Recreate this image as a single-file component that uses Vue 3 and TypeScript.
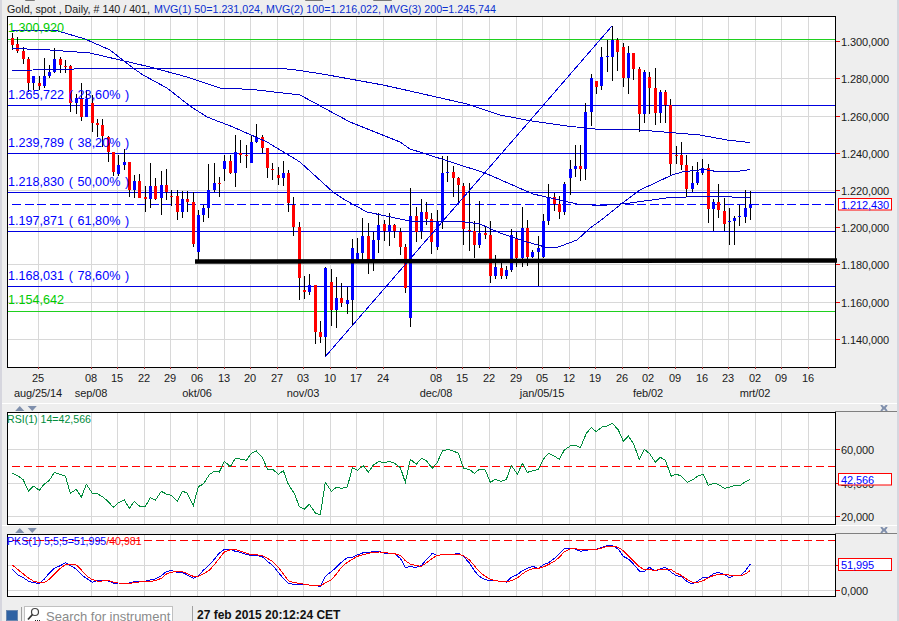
<script setup lang="ts">
type Candle = [number, number, number, number, 'r' | 'b']

// wick top, body top, body bottom, wick bottom, colour — one row per trading day
const candles: Candle[] = [
  [33,38,45,50,'r'],[37,44,51,53,'r'],[47,51,59,64,'r'],[57,59,83,92,'r'],[76,76,83,90,'b'],
  [76,83,86,90,'r'],[58,76,86,88,'b'],[65,72,76,78,'b'],[48,59,72,73,'b'],[57,59,65,73,'r'],
  [60,66,67,73,'r'],[65,66,103,112,'r'],[94,98,103,114,'b'],[83,98,117,121,'r'],[90,99,117,117,'b'],
  [95,103,123,132,'r'],[119,123,125,137,'r'],[119,125,136,147,'r'],[136,137,152,162,'r'],[152,152,172,176,'r'],
  [155,165,174,176,'b'],[149,162,165,170,'b'],[162,162,190,197,'r'],[175,181,190,198,'b'],[174,181,198,198,'r'],
  [186,197,199,212,'r'],[163,186,199,208,'b'],[178,186,199,200,'r'],[171,185,198,215,'b'],[169,185,192,200,'r'],
  [190,196,197,206,'r'],[190,196,212,220,'r'],[191,199,212,218,'b'],[191,199,202,212,'r'],[192,202,244,247,'r'],
  [210,215,252,261,'b'],[205,208,215,222,'b'],[164,190,208,218,'b'],[163,183,190,192,'b'],[177,183,184,197,'r'],
  [155,161,169,181,'b'],[155,161,173,174,'r'],[135,152,173,187,'b'],[140,153,155,163,'r'],[145,155,156,168,'r'],
  [135,142,163,163,'b'],[124,137,142,143,'b'],[135,137,148,153,'r'],[148,148,168,178,'r'],[163,169,170,180,'r'],
  [167,175,178,185,'r'],[161,173,178,186,'b'],[170,173,203,212,'r'],[197,205,227,236,'r'],[222,227,278,300,'r'],
  [276,290,292,299,'r'],[274,285,292,295,'b'],[285,285,332,344,'r'],[321,332,337,343,'r'],[267,268,337,357,'b'],
  [269,282,310,326,'r'],[277,298,310,328,'b'],[283,298,303,307,'r'],[287,300,304,314,'b'],[239,248,300,326,'b'],
  [238,253,263,263,'b'],[218,236,253,260,'b'],[223,236,263,274,'r'],[232,240,259,271,'b'],[213,225,240,253,'b'],
  [220,224,231,241,'r'],[213,225,232,246,'b'],[224,225,231,238,'r'],[228,232,247,255,'r'],[244,247,288,293,'r'],
  [188,216,318,327,'b'],[207,216,232,242,'r'],[199,212,231,239,'b'],[202,212,219,225,'r'],[213,219,242,254,'r'],
  [210,221,247,250,'b'],[156,173,221,229,'b'],[156,172,173,182,'b'],[166,172,178,197,'r'],[177,178,185,202,'r'],
  [183,186,229,245,'r'],[183,230,231,251,'r'],[221,231,245,258,'r'],[201,233,245,248,'b'],[226,233,235,239,'r'],
  [221,235,276,283,'r'],[255,267,276,279,'b'],[260,268,276,279,'r'],[266,270,276,279,'b'],[229,235,270,272,'b'],
  [232,239,258,267,'r'],[207,228,258,267,'b'],[220,228,257,266,'r'],[250,252,257,258,'b'],[236,248,252,286,'b'],
  [214,221,257,258,'b'],[184,197,221,225,'b'],[193,197,204,211,'r'],[196,204,212,219,'r'],[182,184,212,215,'b'],
  [160,169,178,195,'b'],[145,166,169,177,'b'],[145,166,169,181,'r'],[103,112,169,180,'b'],[74,78,112,126,'b'],
  [81,81,87,94,'r'],[47,57,86,90,'b'],[40,56,57,72,'b'],[26,40,57,81,'b'],[38,40,52,71,'r'],
  [43,47,78,87,'r'],[46,53,78,94,'b'],[53,53,69,80,'r'],[67,69,114,132,'r'],[70,72,114,123,'b'],
  [72,77,88,114,'r'],[68,88,113,125,'r'],[90,92,113,123,'b'],[90,92,105,123,'r'],[99,105,164,175,'r'],
  [146,155,156,164,'r'],[142,155,165,170,'r'],[155,165,189,197,'r'],[166,183,189,192,'b'],[162,172,183,185,'b'],
  [159,168,173,175,'b'],[164,168,209,223,'r'],[199,202,209,231,'b'],[184,202,210,218,'r'],[198,211,224,231,'r'],
  [208,221,222,245,'b'],[216,218,221,245,'b'],[205,216,217,226,'b'],[190,208,217,223,'b'],[191,204,208,220,'b'],
]

const candleX = (i: number) => Math.floor(12.5 + 5.31 * i)

const gridX = [38,91,117,144,170,197,224,250,277,303,330,356,383,436,462,489,516,542,569,595,622,648,675,702,728,755,781,808]
const dayLabels = ['25','08','15','22','29','06','13','20','27','03','10','17','24','08','15','22','29','05','12','19','26','02','09','16','23','02','09','16']
const monthLabels: [number, string][] = [[38,'aug/25/14'],[91,'sep/08'],[197,'okt/06'],[303,'nov/03'],[436,'dec/08'],[542,'jan/05/15'],[648,'feb/02'],[755,'mrt/02']]

const priceLevels: [number, string][] = [[41,'1.300,000'],[78,'1.280,000'],[116,'1.260,000'],[153,'1.240,000'],[190,'1.220,000'],[227,'1.200,000'],[264,'1.180,000'],[302,'1.160,000'],[339,'1.140,000']]
const fibLevels: [number, number, string, string][] = [
  [39.5,27,'1.300,920','#0c0'],
  [105.5,94,'1.265,722 ( 23,60% )','#00f'],
  [153.5,142,'1.239,789 ( 38,20% )','#00f'],
  [192.5,181,'1.218,830 ( 50,00% )','#00f'],
  [231.5,220,'1.197,871 ( 61,80% )','#00f'],
  [286.5,275,'1.168,031 ( 78,60% )','#00f'],
  [311.5,299,'1.154,642','#0c0'],
]

const pts = (rows: number[][]) => rows.map(p => p.join(',')).join(' ')

const ma50 = pts([[12,30.5],[58,31],[85,39],[110,50],[133,68],[143,75],[167,88],[190,106],[207,117],[233,127],[267,142],[300,162],[333,192],[345,200],[367,212],[400,219],[410,221],[443,222],[458,221],[480,224],[500,233],[527,242],[547,247.5],[557,247.5],[577,240],[590,228],[600,221],[620,205],[640,190],[672,175],[682,172],[703,169.5],[717,171.5],[737,171.5],[750,169.5]])
const ma100 = pts([[12,48],[27,49],[50,50],[90,53],[120,60],[150,67],[187,77],[220,88],[253,89.5],[300,95],[350,122],[400,142],[410,149],[423,153],[485,173],[533,194],[577,204],[600,205.5],[620,204],[630,203],[670,197.5],[687,197],[723,196.5],[750,198]])
const ma200 = pts([[12,70.5],[95,68.5],[133,68.5],[150,69],[200,68.5],[267,68.5],[283,68.5],[300,70.5],[328,75],[383,85],[410,91],[467,104],[500,115],[530,120.7],[567,126],[600,129.5],[640,130],[700,135],[727,140],[750,142.5]])

// panel series, read off a 3x zoom of each 300-px-wide column of the reference
const scale = (xo: number, rows: number[]) => {
  const out: number[][] = []
  for (let k = 0; k < rows.length; k += 2) out.push([xo + rows[k] / 3, 400 + rows[k + 1] / 3])
  return out
}
const rsi = pts([
  ...scale(0,[37,220,55,228,70,240,85,273,100,258,118,271,133,252,148,241,163,217,181,224,196,228,211,280,229,268,244,292,259,253,277,280,292,281,307,290,325,305,340,322,355,308,373,300,388,325,403,304,418,318,436,319,451,293,466,301,484,274,499,282,514,286,532,304,547,273,562,280,580,316,595,260,610,252,628,224,643,214,658,216,673,184,691,200,706,175,721,177,739,181,754,160,769,153,787,172,802,207,817,207,835,223,850,212,865,253,883,280,898,320]),
  ...scale(300,[13,328,28,313,46,339,61,344,76,247,94,274,109,262,124,265,142,261,157,203,172,211,190,197,205,217,220,195,238,184,253,189,268,184,283,189,301,203,316,247,331,178,349,193,364,175,379,182,397,205,412,187,427,153,445,148,460,153,475,160,490,205,508,208,523,220,538,208,556,210,571,247,586,238,604,244,619,238,634,196,652,223,667,190,682,217,700,212,715,208,730,178,745,160,763,168,778,178,793,150,811,138,826,135,841,143,859,100,874,83,889,95]),
  ...scale(600,[7,80,22,78,37,70,55,90,70,124,85,108,100,130,118,178,133,148,148,160,166,187,181,172,196,181,214,229,229,222,244,229,262,247,277,240,292,229,310,223,325,256,340,250,355,253,373,265,388,262,403,256,421,256,436,245,451,238]),
])
const pksBlue = pts([
  ...scale(0,[37,511,55,529,70,536,85,546,100,551,118,553,133,540,148,522,163,508,181,500,196,491,211,500,229,510,244,527,259,538,277,550,292,545,307,545,325,546,340,552,355,552,373,553,388,552,403,548,418,548,436,547,451,543,466,540,484,530,499,518,514,514,532,520,547,520,562,528,580,538,595,530,610,514,628,497,643,481,658,462,673,451,691,451,706,457,721,460,739,466,754,470,769,469,787,473,802,487,817,498,835,520,850,538,865,553,883,556,898,556]),
  ...scale(300,[13,556,28,558,46,560,61,562,76,532,94,518,109,505,124,490,142,476,157,475,172,468,190,461,205,460,220,458,238,458,253,462,268,464,283,464,301,478,316,505,331,503,349,505,364,500,379,482,397,463,412,470,427,466,445,466,460,466,475,463,490,472,508,492,523,515,538,532,556,542,571,545,586,545,604,547,619,549,634,535,652,527,667,515,682,508,700,502,715,510,730,497,745,492,763,478,778,465,793,448,811,449,826,450,841,457,859,454,874,451,889,451]),
  ...scale(600,[7,445,22,440,37,440,55,450,70,472,85,480,100,495,118,516,133,517,148,505,166,516,181,510,196,505,214,520,229,530,244,533,262,548,277,555,292,547,310,535,325,535,340,525,355,520,373,526,388,536,403,529,421,529,436,516,451,495]),
])
const pksRed = pts([
  ...scale(0,[37,498,55,513,70,525,85,537,100,546,118,551,133,551,148,541,163,525,181,508,196,497,211,496,229,498,244,513,259,530,277,542,292,546,307,546,325,545,340,549,355,552,373,553,388,553,403,551,418,549,436,548,451,547,466,545,484,538,499,525,514,520,532,517,547,518,562,524,580,532,595,532,610,525,628,514,643,497,658,478,673,459,691,452,706,451,721,456,739,462,754,467,769,467,787,470,802,478,817,487,835,505,850,525,865,545,883,551,898,553]),
  ...scale(300,[13,556,28,558,46,560,61,561,76,552,94,543,109,525,124,505,142,490,157,481,172,472,190,467,205,463,220,460,238,459,253,460,268,463,283,464,301,469,316,485,331,495,349,500,364,502,379,492,397,478,412,469,427,467,445,468,460,467,475,466,490,470,508,482,523,500,538,518,556,532,571,541,586,545,604,547,619,548,634,545,652,537,667,525,682,515,700,508,715,508,730,504,745,497,763,487,778,475,793,458,811,450,826,449,841,452,859,453,874,451,889,451]),
  ...scale(600,[7,447,22,442,37,441,55,445,70,455,85,470,100,485,118,503,133,512,148,512,166,514,181,511,196,510,214,512,229,522,244,529,262,542,277,549,292,551,310,545,325,536,340,530,355,526,373,526,388,528,403,530,421,531,436,525,451,514]),
])
</script>

<template>
  <div class="screen">
    <span class="stub stub-a"></span>
    <span class="stub stub-b"></span>
    <span class="stub stub-c"></span>
    <header class="title">
      <span class="title-dark">Gold, spot , Daily, # 140 / 401,</span>
      <span class="title-blue">MVG(1) 50=1.231,024, MVG(2) 100=1.216,022, MVG(3) 200=1.245,744</span>
    </header>

    <svg class="chart main" viewBox="2 16 895 387">
      <rect x="7" y="16" width="828" height="351" fill="#fff" />
      <g class="lines">
        <line v-for="x in gridX" :key="x" :x1="x + 0.5" :x2="x + 0.5" y1="17" y2="367" stroke="#d8d8d8" />
        <line v-for="l in priceLevels" :key="l[0]" x1="7" x2="835" :y1="l[0] + 0.5" :y2="l[0] + 0.5" stroke="#d8d8d8" />
        <line v-for="l in fibLevels" :key="l[2]" x1="7" x2="835" :y1="l[0]" :y2="l[0]" :stroke="l[3] === '#0c0' ? '#1fd01f' : '#0000e0'" />
        <line x1="12" x2="835" y1="204.5" y2="204.5" stroke="#00f" stroke-dasharray="9 3.5" />
        <g v-for="(c, i) in candles" :key="i">
          <rect :x="candleX(i)" :y="c[0]" width="1" :height="c[3] - c[0]" fill="#000" />
          <rect :x="candleX(i) - 1" :y="c[1]" width="3" :height="c[2] - c[1]" :fill="c[4] === 'r' ? '#f00' : '#00f'" />
        </g>
        <polyline :points="ma50" class="ma" />
        <polyline :points="ma100" class="ma" />
        <polyline :points="ma200" class="ma" />
        <line x1="325" y1="357" x2="612" y2="26" stroke="#00d" />
        <rect x="7" y="16" width="828" height="351" fill="none" stroke="#000" />
      </g>
      <line x1="195" y1="261.5" x2="837" y2="260.5" stroke="#000" stroke-width="4.5" />
      <text v-for="l in fibLevels" :key="l[2]" x="8" :y="l[1] + 4.5" class="fib" :fill="l[3]">{{ l[2] }}</text>
      <g class="lines">
        <line v-for="x in gridX" :key="x" :x1="x + 0.5" :x2="x + 0.5" y1="367" y2="369" stroke="#a33" />
        <line v-for="l in priceLevels" :key="l[0]" x1="836" x2="840" :y1="l[0] + 0.5" :y2="l[0] + 0.5" stroke="#e00" />
      </g>
      <text v-for="l in priceLevels" :key="l[0]" x="841" :y="l[0] + 4.5" class="axis">{{ l[1] }}</text>
      <text v-for="(d, i) in dayLabels" :key="i" :x="gridX[i]" y="382" class="axis mid">{{ d }}</text>
      <text v-for="m in monthLabels" :key="m[1]" :x="m[0]" y="397" class="axis mid">{{ m[1] }}</text>
      <rect x="838.5" y="198.5" width="53" height="11.5" fill="#fff" stroke="#f00" />
      <text x="841" y="209" class="value">1.212,430</text>
    </svg>

    <div class="pane-bar">
      <svg class="handles" viewBox="0 0 26 6"><path d="M0 6 L5.5 0 L11 6Z M15 0 L26 0 L20.5 6Z" fill="#7f8fac" /></svg>
      <svg class="close" viewBox="0 0 8 7"><path d="M0 0h2l2 2 2-2h2v1L6 3.5 8 6v1H6L4 5 2 7H0V6l2-2.5L0 1Z" fill="#7f8fac" /></svg>
    </div>

    <svg class="chart rsi" viewBox="2 411 895 114">
      <rect x="7" y="412" width="828" height="112" fill="#fff" />
      <g class="lines">
        <line v-for="x in gridX" :key="x" :x1="x + 0.5" :x2="x + 0.5" y1="413" y2="524" stroke="#d8d8d8" />
        <line v-for="y in [449, 483, 516]" :key="y" x1="7" x2="835" :y1="y + 0.5" :y2="y + 0.5" stroke="#d8d8d8" />
        <line x1="12" x2="835" y1="466.5" y2="466.5" stroke="#f00" stroke-dasharray="8 4" />
        <polyline :points="rsi" fill="none" stroke="#008c3c" />
        <rect x="7" y="412" width="828" height="112" fill="none" stroke="#000" />
        <line x1="835" x2="897" y1="411.5" y2="411.5" stroke="#808080" />
        <line v-for="y in [449, 483, 516]" :key="y" x1="836" x2="840" :y1="y + 0.5" :y2="y + 0.5" stroke="#e00" />
      </g>
      <text x="7" y="423" class="label" fill="#008c3c">RSI(1) 14=42,566</text>
      <text x="841" y="454" class="axis">60,000</text>
      <text x="841" y="488" class="axis">40,000</text>
      <text x="841" y="521" class="axis">20,000</text>
      <rect x="838.5" y="473.5" width="53" height="11.5" fill="#fff" stroke="#f00" />
      <text x="841" y="484" class="value">42,566</text>
    </svg>

    <div class="pane-bar">
      <svg class="handles" viewBox="0 0 26 6"><path d="M0 6 L5.5 0 L11 6Z M15 0 L26 0 L20.5 6Z" fill="#7f8fac" /></svg>
      <svg class="close" viewBox="0 0 8 7"><path d="M0 0h2l2 2 2-2h2v1L6 3.5 8 6v1H6L4 5 2 7H0V6l2-2.5L0 1Z" fill="#7f8fac" /></svg>
    </div>

    <svg class="chart pks" viewBox="2 534 895 64">
      <rect x="7" y="535" width="828" height="62" fill="#fff" />
      <g class="lines">
        <line v-for="x in gridX" :key="x" :x1="x + 0.5" :x2="x + 0.5" y1="536" y2="597" stroke="#d8d8d8" />
        <line v-for="y in [566, 591]" :key="y" x1="7" x2="835" :y1="y + 0.5" :y2="y + 0.5" stroke="#d8d8d8" />
        <line x1="12" x2="835" y1="541.5" y2="541.5" stroke="#f00" stroke-dasharray="8 4" />
        <polyline :points="pksBlue" fill="none" stroke="#00e" />
        <polyline :points="pksRed" fill="none" stroke="#f00" />
        <rect x="7" y="535" width="828" height="62" fill="none" stroke="#000" />
        <line x1="835" x2="897" y1="534.5" y2="534.5" stroke="#808080" />
        <line v-for="y in [566, 591]" :key="y" x1="836" x2="840" :y1="y + 0.5" :y2="y + 0.5" stroke="#e00" />
      </g>
      <text x="7" y="546" class="label" fill="#00f">PKS(1) 5;5;5=51,995<tspan fill="#f00">/40,981</tspan></text>
      <text x="841" y="596" class="axis">0,000</text>
      <rect x="838.5" y="559.5" width="53" height="12" fill="#fff" stroke="#f00" />
      <text x="841" y="570" class="value">51,995</text>
    </svg>

    <footer class="status">
      <span class="square"></span>
      <span class="rule"></span>
      <label class="search">
        <svg class="glass" viewBox="0 0 16 15">
          <circle cx="9" cy="5" r="3.5" fill="none" stroke="#444" stroke-width="1.2" />
          <path d="M6.5 7.5L2 12.5" stroke="#333" stroke-width="1.8" />
          <path d="M9 13.5h1M11 13.5h1M13 13.5h1" stroke="#222" />
        </svg>
        <span class="placeholder">Search for instrument</span>
      </label>
      <span class="rule tall"></span>
      <strong class="clock">27 feb 2015 20:12:24 CET</strong>
    </footer>
  </div>
</template>

<style scoped>
.screen {
  position: relative;
  width: 899px;
  height: 621px;
  box-sizing: border-box;
  overflow: hidden;
  display: flex;
  flex-direction: column;
  background: #eeeeee;
  border-left: 2px solid #d6d6de;
  border-right: 2px solid #d6d6de;
  font-family: "Liberation Sans", Arial, sans-serif;
}
.stub {
  position: absolute;
  top: 0;
  height: 1px;
  background: #777;
  border-radius: 0 0 2px 2px;
}
.stub-a { left: 23px; width: 10px; }
.stub-b { left: 303px; width: 18px; }
.stub-c { left: 371px; width: 19px; }
.title {
  height: 16px;
  flex: none;
  padding-left: 5px;
  display: flex;
  gap: 4px;
  font-size: 10.7px;
  line-height: 18px;
  white-space: nowrap;
  box-sizing: border-box;
}
.title-dark { color: #222; }
.title-blue { color: #0a2fd0; }
.chart { display: block; flex: none; width: 895px; }
.main { height: 387px; }
.rsi { height: 114px; }
.pks { height: 64px; }
.lines { shape-rendering: crispEdges; }
.ma { fill: none; stroke: #0000c8; }
.fib { font-size: 12.6px; word-spacing: 1.2px; }
.label { font-size: 10.6px; }
.axis { font-size: 11px; fill: #1a1a1a; letter-spacing: -0.1px; }
.mid { text-anchor: middle; }
.value { font-size: 11px; fill: #00f; letter-spacing: -0.1px; }
.pane-bar {
  flex: none;
  height: 8px;
  display: flex;
  align-items: center;
  justify-content: space-between;
  padding: 1px 9px 0 11px;
  box-sizing: border-box;
  border-top: 1px solid #fff;
}
.handles { width: 26px; height: 5px; }
.close { width: 8px; height: 6px; }
.status {
  flex: 1;
  display: flex;
  align-items: flex-end;
  padding-left: 4px;
  min-height: 0;
}
.square {
  width: 12px;
  height: 11px;
  background: #2f62a3;
  border: 1px solid #6b88b0;
  box-sizing: border-box;
  margin-right: 3px;
}
.rule {
  width: 1px;
  height: 14px;
  background: #a0a0a0;
  margin-right: 2px;
}
.rule.tall { margin: 0 4px 0 19px; height: 15px; }
.search {
  width: 149px;
  height: 15px;
  box-sizing: border-box;
  display: flex;
  align-items: flex-start;
  background: #fff;
  border: 1px solid #c0c0c0;
  border-bottom: none;
  overflow: hidden;
}
.glass { width: 16px; height: 15px; flex: none; margin-left: 1px; }
.placeholder { font-size: 13px; line-height: 19px; color: #8a8a8a; margin-left: 4px; white-space: nowrap; }
.clock { font-size: 12px; line-height: 15px; color: #111; white-space: nowrap; margin-bottom: -2px; }
</style>
